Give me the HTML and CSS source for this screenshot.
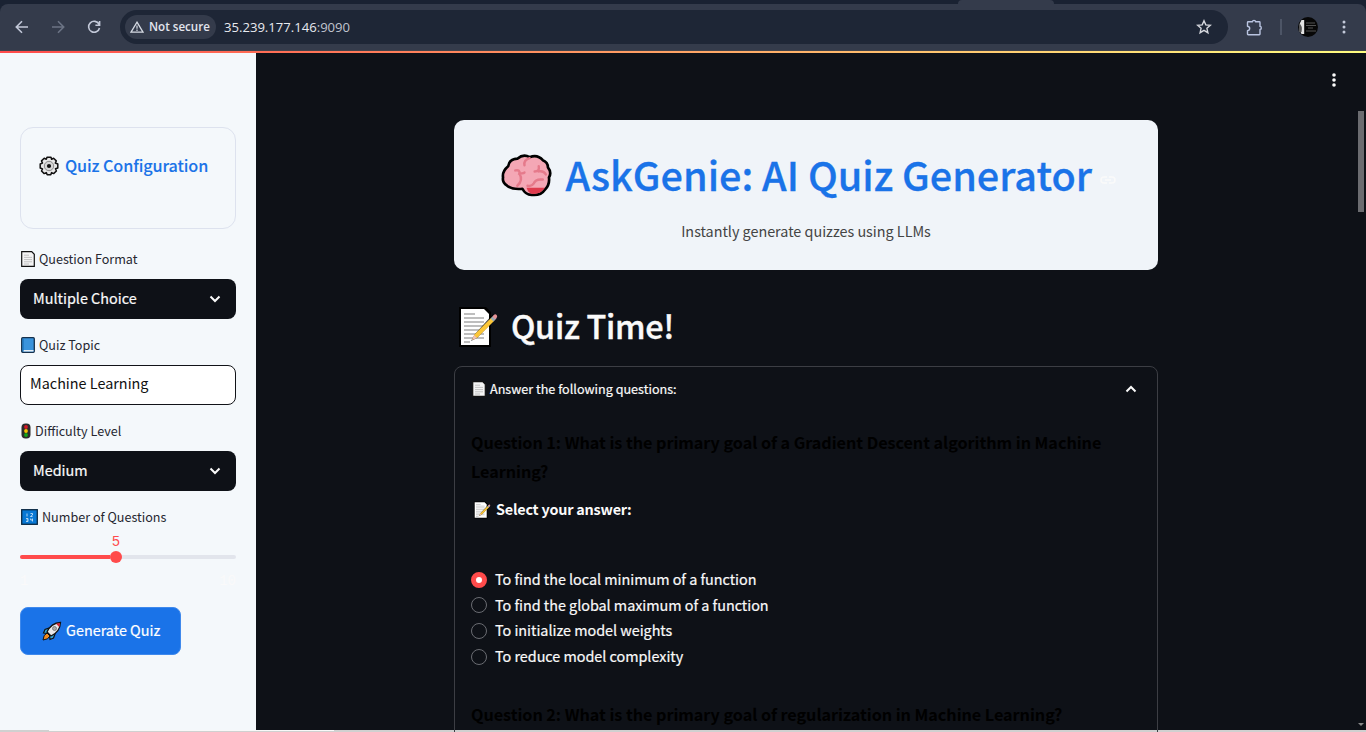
FILE: index.html
```html
<!DOCTYPE html>
<html lang="en">
<head>
<meta charset="utf-8">
<title>AskGenie: AI Quiz Generator</title>
<link rel="stylesheet" href="styles.css">
</head>
<body>
<svg class="defs" aria-hidden="true">
  <symbol id="page" viewBox="0 0 14 16"><path d="M.7.7h10L13.3 3.3v12H.7z" fill="#f4f4f4" stroke="#111" stroke-width="1.2"/><path d="M3 4.2h5M3 6.4h8M3 8.6h8M3 10.8h8M3 13h5" stroke="#bbb" stroke-width=".9"/></symbol>
  <symbol id="memo" viewBox="0 0 40 42"><path d="M1 1h27l5 5v35H1z" fill="#000"/><path d="M3 3h23l5 5v31H3z" fill="#fff"/><path d="M6 8h11M6 12h20M6 16h20M6 20h20M6 24h20M6 28h20M6 32h20M6 36h6" stroke="#a9a9a9" stroke-width="1.3"/><path d="M13 35l4-7L35 8l4 3.500L19 32z" fill="#000" opacity=".75"/><path d="M14 34l2.500-5.500 17-17 3 3-17 17z" fill="#fbc638"/><path d="M14 34l2-5 3 3z" fill="#efc0b6"/><path d="M32.500 12.500l3-3 3 3-3 3z" fill="#9baab5"/><path d="M34.500 10.500l1.500-1.700q1.500-1 2.600.2t.2 2.600l-1.600 1.600z" fill="#e69295"/></symbol>
  <symbol id="chev" viewBox="0 0 12 8"><path d="M1.500 1.500L6 6l4.500-4.500" fill="none" stroke="#fafafa" stroke-width="2"/></symbol>
</svg>
<div class="browser">
  <div class="tabstrip"><div class="tab"></div></div>
  <div class="toolbar">
    <svg class="nav back" viewBox="0 0 14 14"><path d="M13 7H1.500M7 1.300L1.300 7 7 12.700" /></svg>
    <svg class="nav forward" viewBox="0 0 14 14"><path d="M1 7h11.500M7 1.300L12.700 7 7 12.700"/></svg>
    <svg class="nav reload" viewBox="0 0 14 14"><path d="M12 4.200A5.500 5.500 0 1 0 12.500 8M12.600 1v4.200H8.400"/></svg>
    <div class="address">
      <div class="security"><svg viewBox="0 0 14 12"><path d="M7 1.200L13 11.200H1z" fill="none" stroke="#d5dae3" stroke-width="1.300"/><path d="M7 4.500v3.300M7 8.600v1.300" stroke="#d5dae3" stroke-width="1.200"/></svg><span class="t">Not secure</span></div>
      <div class="url t">35.239.177.146<span>:9090</span></div>
      <svg class="star" viewBox="0 0 16 16"><path d="M8 1.800l1.800 4.100 4.500.4-3.400 3 1 4.400L8 11.400l-3.900 2.300 1-4.400-3.400-3 4.500-.4z"/></svg>
    </div>
    <svg class="puzzle" viewBox="0 0 17 17"><path d="M2.200 2.700H6.500a1.500 1.300 0 0 1 3 0H13.300q.7 0 .7.700V7.400a1.300 1.500 0 0 1 0 3V15q0 .7-.7.700H2.200q-.7 0-.7-.7V11.800q2.200-.4 2.200-2.300T1.500 7.200V3.400q0-.7.700-.7z"/></svg>
    <div class="divider"></div>
    <svg class="avatar" viewBox="0 0 20 20"><circle cx="10" cy="10" r="10" fill="#070707"/><path d="M3.500 3h2.700v14H3.500L2 14V6z" fill="#e4e4e4"/><path d="M1 6q4 3 2.500 9H1z" fill="#555"/><path d="M8 6h9M8 8.500h10M10 11h5M8 14h10" stroke="#666" stroke-width=".8"/></svg>
    <svg class="kebab" viewBox="0 0 4 14"><circle cx="2" cy="2" r="1.500"/><circle cx="2" cy="7" r="1.500"/><circle cx="2" cy="12" r="1.500"/></svg>
  </div>
</div>
<div class="decoration"></div>
<div class="app">
  <aside class="sidebar">
    <div class="config">
      <svg viewBox="0 0 20 20"><path d="M8 1.200h4l.6 2 2-.9 2.700 2.600-1 2.100 2.500 1v4l-2.300.8.9 2.200-2.800 2.600-2-1-.8 2.200H8.200l-.9-2.200-2.100 1L2.500 15l1-2.100-2.300-.9V8l2.300-.9-1-2.200 2.700-2.600 2.100.9z" fill="#e8e8e8" stroke="#111" stroke-width="1.500" stroke-linejoin="round"/><circle cx="10" cy="10" r="4.700" fill="#d6d6d6" stroke="#777" stroke-width=".8"/><circle cx="10" cy="10" r="2.100" fill="#111"/></svg>
      <span class="t">Quiz Configuration</span>
    </div>
    <div class="label"><svg class="i14"><use href="#page"/></svg><span class="t">Question Format</span></div>
    <div class="select"><span class="t">Multiple Choice</span><svg><use href="#chev"/></svg></div>
    <div class="label"><svg class="i14" viewBox="0 0 14 16"><rect x=".7" y=".7" width="12.600" height="14.600" rx="1" fill="#3a94dc" stroke="#15314c" stroke-width="1.300"/><path d="M2.500 13h10v1.500h-10z" fill="#e7eef4"/><path d="M2.200 1.500v12" stroke="#1c75bd" stroke-width="1"/></svg><span class="t">Quiz Topic</span></div>
    <div class="input"><span class="t">Machine Learning</span></div>
    <div class="label"><svg class="i10" viewBox="0 0 10 16"><rect x=".5" y=".5" width="9" height="15" rx="4" fill="#2c2c2c"/><circle cx="5" cy="4" r="1.900" fill="#d51926"/><circle cx="5" cy="8" r="1.900" fill="#f5c400"/><circle cx="5" cy="12" r="1.900" fill="#14a514"/></svg><span class="t">Difficulty Level</span></div>
    <div class="select"><span class="t">Medium</span><svg><use href="#chev"/></svg></div>
    <div class="label"><svg class="i17" viewBox="0 0 17 16"><rect x=".7" y=".7" width="15.600" height="14.600" fill="#0878d4" stroke="#0b2a44" stroke-width="1.300"/><path d="M6 4.500v3M9.500 4.500h2v1.500l-2 1.500h2M5 9.500h2v3H5M5.500 11H7M9.700 9.500V11h2M11.500 9.500v3" fill="none" stroke="#d7ebfa" stroke-width=".8"/></svg><span class="t">Number of Questions</span></div>
    <div class="slider">
      <div class="value">5</div>
      <div class="track"><div class="fill"></div><div class="thumb"></div></div>
      <div class="range"><span>1</span><span>10</span></div>
    </div>
    <div class="generate"><svg viewBox="0 0 20 20"><path d="M7 7L3 8.500 1.500 12l4 .5M13 13l-1.500 4-3.500 1.500-.5-4z" fill="#35a9dc" stroke="#111" stroke-width="1.200"/><path d="M5 11Q9 2 18.500 1.500 18 11 9 15z" fill="#e9e9e9" stroke="#111" stroke-width="1.300"/><path d="M14 2.800l4-.8-.8 4z" fill="#d8202e"/><circle cx="12.500" cy="7.500" r="2" fill="#aaa" stroke="#666" stroke-width=".7"/><path d="M5 12l3 3-2.500 2.800L1 19l1.200-4.500z" fill="#f38b20" stroke="#111" stroke-width="1"/></svg><span class="t">Generate Quiz</span></div>
  </aside>
  <main class="main">
    <svg class="menu" viewBox="0 0 4 14"><circle cx="2" cy="2" r="1.800"/><circle cx="2" cy="7" r="1.800"/><circle cx="2" cy="12" r="1.800"/></svg>
    <div class="scrollbar"><div class="scrollthumb"></div><div class="scrollarrow"></div></div>
    <div class="content">
      <header class="hero">
        <h1><svg class="brain" viewBox="0 0 50 42"><path d="M7 12Q8 5 16 4.500 22-.5 28 3 36 0 41 6 46 8 46 13q4 5 1 10 1 7-4 12-4 6-13 5-6 0-9-6-10 1-15-3-5-3-4-8-1-6 5-11z" fill="#f4a7b5" stroke="#000" stroke-width="2.600" stroke-linejoin="round"/><path d="M25 33h18q-4 6-11 6.200-5 0-7-6.200z" fill="#df3b4e"/><path d="M28 4q-6 2-5 7M14 16q5-1 4 3 5 0 5-1M18 19q4 7-2 12M37 12q1 5-4 5M37 17q5-1 7 3M41 25q-7-1-9 4-2 3-6 2" fill="none" stroke="#e57a8b" stroke-width="2.400" stroke-linecap="round"/></svg><span class="t">AskGenie: AI Quiz Generator</span><svg class="link" viewBox="0 0 16 8"><path d="M7 1H4a3 3 0 0 0 0 6h3M9 1h3a3 3 0 0 1 0 6H9M5 4h6"/></svg></h1>
        <p><span class="t">Instantly generate quizzes using LLMs</span></p>
      </header>
      <h2><svg><use href="#memo"/></svg><span class="t">Quiz Time!</span></h2>
      <section class="expander">
        <div class="summary"><svg class="i14"><use href="#page"/></svg><span class="t">Answer the following questions:</span><svg class="up"><use href="#chev"/></svg></div>
        <div class="question"><span class="t">Question 1: What is the primary goal of a Gradient Descent algorithm in Machine</span><br><span class="t">Learning?</span></div>
        <div class="prompt"><svg><use href="#memo"/></svg><span class="t">Select your answer:</span></div>
        <div class="options">
          <div class="option"><i class="radio on"></i><span class="t">To find the local minimum of a function</span></div>
          <div class="option"><i class="radio"></i><span class="t">To find the global maximum of a function</span></div>
          <div class="option"><i class="radio"></i><span class="t">To initialize model weights</span></div>
          <div class="option"><i class="radio"></i><span class="t">To reduce model complexity</span></div>
        </div>
        <div class="question"><span class="t">Question 2: What is the primary goal of regularization in Machine Learning?</span></div>
      </section>
    </div>
  </main>
</div>
<div class="taskbar"><div></div></div>
</body>
</html>
```
FILE: styles.css
```css
* { box-sizing: border-box; }
body { margin: 0; width: 1366px; height: 732px; overflow: hidden; background: #0e1117; font-family: "Noto Sans CJK SC", "Noto Sans", sans-serif; font-size: 14.4px; line-height: 24px; }
svg { display: block; flex: none; }
.t { white-space: nowrap; }
.defs { position: absolute; width: 0; height: 0; }

.browser { height: 51px; background: #1a2232; }
.tabstrip { height: 4px; padding-left: 958px; }
.tab { width: 96px; height: 4px; background: #343b4b; border-radius: 5px 5px 0 0; }
.toolbar { height: 47px; padding: 0 20px 0 15px; background: #343b4b; border-radius: 8px 8px 0 0; display: flex; align-items: center; border-bottom: 1px solid #40434c; }
.nav { width: 14px; height: 14px; fill: none; stroke: #c3c9d9; stroke-width: 1.6; }
.forward { margin-left: 22px; stroke: #6c7485; }
.reload { margin-left: 22px; }
.address { display: flex; align-items: center; width: 1108px; height: 34px; margin-left: 19px; padding: 0 16px 0 5px; border-radius: 17px; background: #1e2636; }
.security { display: flex; align-items: center; width: 91px; height: 24px; padding-left: 5px; gap: 5px; border-radius: 12px; background: #343b4b; color: #e3e6ee; font: 600 11.6px/20px "Open Sans", sans-serif; }
.security svg { width: 14px; height: 12px; }
.url { margin-left: 8px; padding-bottom: 1px; color: #e8eaf0; font: 13.1px/20px "Open Sans", sans-serif; }
.url span { color: #c0c4ce; }
.star { width: 16px; height: 16px; margin-left: auto; fill: none; stroke: #d5d7dd; stroke-width: 1.4; }
.puzzle { width: 17px; height: 17px; margin-left: 18px; fill: none; stroke: #b9c4e0; stroke-width: 1.4; stroke-linejoin: round; }
.divider { width: 2px; height: 16px; margin-left: 17px; background: #4d5566; }
.avatar { width: 20px; height: 20px; margin-left: 16px; }
.kebab { width: 4px; height: 14px; margin-left: 24px; fill: #c3c9d9; }
.decoration { height: 2px; background: linear-gradient(90deg, #ff4b4b, #fffd80); }

.app { display: flex; height: 677px; }
.sidebar { width: 256px; padding: 74px 20px 0; background: #f4f8fb; color: #262730; }
.config { display: flex; align-items: flex-start; height: 102px; margin-bottom: 18px; padding: 28px 0 0 18px; gap: 6px; border: 1px solid #dde2ee; border-radius: 13px; color: #1a73e8; font-size: 16.2px; font-weight: 500; line-height: 22px; letter-spacing: -.1px; -webkit-text-stroke: .1px; }
.config svg { width: 20px; height: 20px; }
.config .t { margin-top: -2px; }
.label { display: flex; align-items: center; height: 24px; margin-bottom: 8px; padding-left: 1px; gap: 4px; font-size: 12.6px; }
.i14 { width: 14px; height: 16px; }
.i10 { width: 10px; height: 16px; }
.i17 { width: 17px; height: 16px; }
.select .t, .input .t, .summary .t, .prompt .t, .generate .t { padding-bottom: 2px; }
.select, .input { display: flex; align-items: center; height: 40px; margin-bottom: 14px; border-radius: 8px; }
.select { justify-content: space-between; padding: 0 15px 0 13px; background: #0e1117; color: #fafafa; -webkit-text-stroke: .2px; }
.select svg { width: 12px; height: 8px; }
.input { padding: 0 0 2px 9px; border: 1px solid #111318; background: #fff; color: #111; }
.slider { height: 74px; margin-top: -8px; font: 14px/20px "Liberation Mono", monospace; }
.value { width: 192px; height: 24px; padding-top: 3px; text-align: center; color: #ff4b4b; }
.track { display: flex; align-items: center; height: 4px; margin-top: 2px; border-radius: 2px; background: #e2e5ec; }
.fill { width: 90px; height: 4px; border-radius: 2px 0 0 2px; background: #ff4b4b; }
.thumb { width: 12px; height: 12px; border-radius: 50%; background: #ff4b4b; }
.range { display: flex; justify-content: space-between; margin-top: 12px; color: #fafafa; }
.generate { display: flex; align-items: center; width: 161px; height: 48px; margin-top: 4px; padding-left: 21px; gap: 4px; border: 1px solid #3f89ec; border-radius: 8px; background: #1a73e8; color: #fff; -webkit-text-stroke: .2px; }
.generate svg { width: 20px; height: 20px; }

.main { position: relative; flex: 1; background: #0e1117; color: #fafafa; }
.menu { position: absolute; left: 1076px; top: 20px; width: 4px; height: 14px; fill: #fafafa; }
.scrollbar { position: absolute; right: 0; top: 0; width: 8px; height: 677px; }
.scrollthumb { width: 6px; height: 101px; margin: 58px 0 0; background: #6b6c70; }
.scrollarrow { width: 6px; margin-top: 511px; border: 3px solid transparent; border-top-color: #888; }
.content { width: 704px; margin-left: 198px; padding-top: 67px; }
.hero { height: 150px; padding-top: 30px; border-radius: 10px; background: #f0f4f9; }
h1 { display: flex; align-items: center; margin: 0; padding-left: 47px; height: 52px; color: #1a73e8; font-size: 39.6px; font-weight: 500; line-height: 52px; -webkit-text-stroke: .3px; }
h1 .t { padding-bottom: 5px; }
.brain { width: 51px; height: 43px; margin: -2px 13.5px 0 0; }
.link { width: 16px; height: 8px; margin: 7px 0 0 8px; fill: none; stroke: #fafafa; stroke-width: 1.6; }
.hero p { margin: 17px 0 0; text-align: center; color: #444; letter-spacing: -.02px; }
h2 { display: flex; align-items: center; height: 44px; margin: 36px 0 0; padding-left: 4px; gap: 13px; font-size: 32.4px; font-weight: 500; line-height: 44px; letter-spacing: -.3px; -webkit-text-stroke: .4px; }
h2 .t { padding-bottom: 6px; }
h2 svg { width: 40px; height: 42px; margin-top: -3px; }
.expander { height: 380px; margin-top: 16px; padding: 0 16px; border: 1px solid #3c3e44; border-radius: 8px; }
.summary { display: flex; align-items: center; height: 45px; padding-left: 1px; gap: 4px; font-size: 12.6px; -webkit-text-stroke: .2px; }
.summary .i14 { margin-top: -1px; }
.summary .up { width: 12px; height: 8px; margin: -2px 4px 0 auto; transform: rotate(180deg); }
.question { color: #000; font-size: 16.2px; font-weight: 700; line-height: 29px; margin-top: 16px; letter-spacing: -.042px; }
.prompt { display: flex; align-items: center; height: 24px; margin-top: 12px; padding-left: 2px; gap: 5px; font-weight: 700; letter-spacing: -.21px; }
.prompt svg { width: 18px; height: 18px; margin-top: -1px; }
.options { margin-top: 45px; }
.option { display: flex; align-items: center; height: 25.6px; gap: 8px; letter-spacing: -.03px; -webkit-text-stroke: .2px; }
.option .t { padding-bottom: 1px; }
.radio { width: 16px; height: 16px; border: 1px solid #6a6c72; border-radius: 50%; }
.radio.on { border: 5px solid #ff4b4b; background: #fff; }
.options + .question { margin-top: 31px; }
.taskbar { height: 2px; background: #d0d0d0; }
.taskbar div { width: 285px; height: 1px; margin-left: 49px; background: #f8f8f8; }
```
